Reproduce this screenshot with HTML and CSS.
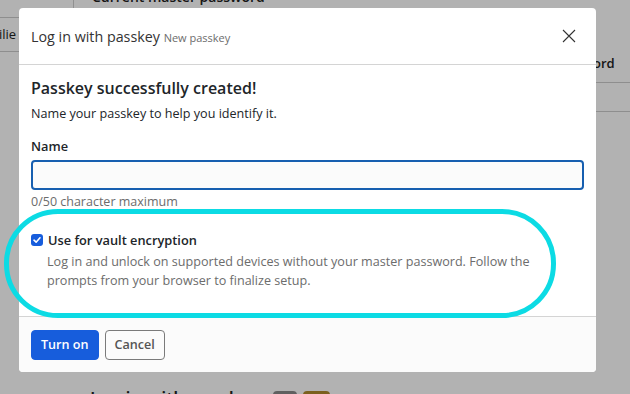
FILE: index.html
```html
<!DOCTYPE html>
<html>
<head>
<meta charset="utf-8">
<link rel="stylesheet" href="styles.css">
</head>
<body>
<div class="page">
  <div class="bg-col-line"></div>
  <div class="bg-top-label">Current master password</div>
  <div class="bg-left-label">ilie</div>
  <div class="bg-left-line a"></div>
  <div class="bg-left-line b"></div>
  <div class="bg-right-label">ord</div>
  <div class="bg-right-line a"></div>
  <div class="bg-right-line b"></div>
  <div class="bg-bottom">
    <span class="bg-bottom-title">Log in with passkey</span>
    <span class="bg-badge grey"></span>
    <span class="bg-badge gold"></span>
  </div>
  <div class="overlay"></div>

  <div class="modal">
    <div class="modal-header">
      <div class="modal-title">Log in with passkey <span class="modal-subtitle">New passkey</span></div>
      <button class="close" aria-label="Close">
        <svg width="14" height="14" viewBox="0 0 14 14"><path d="M1 1L13 13M13 1L1 13" stroke="#333" stroke-width="1.1" fill="none"/></svg>
      </button>
    </div>
    <div class="modal-body">
      <h2 class="success">Passkey successfully created!</h2>
      <p class="lead">Name your passkey to help you identify it.</p>
      <label class="field-label">Name</label>
      <div class="input"></div>
      <div class="hint">0/50 character maximum</div>
      <div class="check-row">
        <span class="checkbox">
          <svg width="12" height="12" viewBox="0 0 12 12"><path d="M3 6.2L5.1 8.2L9 3.8" stroke="#fff" stroke-width="1.6" fill="none" stroke-linecap="round" stroke-linejoin="round"/></svg>
        </span>
        <span class="check-label">Use for vault encryption</span>
      </div>
      <p class="check-desc">Log in and unlock on supported devices without your master password. Follow the prompts from your browser to finalize setup.</p>
    </div>
    <div class="modal-footer">
      <button class="btn primary">Turn on</button>
      <button class="btn secondary">Cancel</button>
    </div>
  </div>

  <div class="annotation"></div>
</div>
</body>
</html>
```

FILE: styles.css
```css
html, body {
  margin: 0;
  padding: 0;
}
body {
  width: 630px;
  height: 394px;
  overflow: hidden;
  font-family: "Open Sans", "Liberation Sans", sans-serif;
  background: #ffffff;
}
.page {
  position: relative;
  width: 630px;
  height: 394px;
  overflow: hidden;
}
.bg-col-line {
  position: absolute;
  left: 73px;
  top: 0;
  width: 1px;
  height: 10px;
  background: #cfcfcf;
}
.bg-top-label {
  position: absolute;
  left: 92px;
  top: -13px;
  font-size: 14px;
  font-weight: 600;
  color: #222;
}
.bg-left-label {
  position: absolute;
  left: -1px;
  top: 25px;
  font-size: 13px;
  color: #222;
}
.bg-left-line {
  position: absolute;
  left: 0;
  width: 20px;
  height: 1px;
  background: #cccccc;
}
.bg-left-line.a { top: 17px; }
.bg-left-line.b { top: 51px; }
.bg-right-label {
  position: absolute;
  left: 593px;
  top: 54px;
  font-size: 13px;
  font-weight: 600;
  color: #222;
}
.bg-right-line {
  position: absolute;
  left: 596px;
  width: 40px;
  height: 1px;
  background: #cccccc;
}
.bg-right-line.a { top: 82px; }
.bg-right-line.b { top: 111px; }
.bg-bottom {
  position: absolute;
  left: 90px;
  top: 388px;
  display: flex;
  align-items: flex-start;
  gap: 6px;
}
.bg-bottom-title {
  font-size: 18px;
  font-weight: 600;
  color: #222;
  line-height: 22px;
  margin-top: -1px;
}
.bg-badge {
  width: 24px;
  height: 16px;
  border-radius: 4px;
  margin-top: 3px;
}
.bg-badge.grey { background: #8a8a8a; margin-left: 8px; }
.bg-badge.gold { background: #b08a2c; width: 27px; }
.overlay {
  position: absolute;
  inset: 0;
  background: rgba(0, 0, 0, 0.3);
}

.modal {
  position: absolute;
  left: 19px;
  top: 8px;
  width: 577px;
  height: 364px;
  background: #ffffff;
  border-radius: 4px;
  display: flex;
  flex-direction: column;
  overflow: hidden;
}
.modal-header {
  height: 56px;
  border-bottom: 1px solid #d4d4d4;
  display: flex;
  align-items: center;
  justify-content: space-between;
  padding: 0 20px 0 12px;
  flex-shrink: 0;
}
.modal-title {
  font-size: 14.3px;
  color: #333;
  margin-top: 1px;
}
.modal-subtitle {
  font-size: 11px;
  color: #6c6c6c;
}
.close {
  border: 0;
  background: none;
  padding: 0;
  width: 14px;
  height: 14px;
  display: flex;
  margin-top: -1px;
}
.modal-body {
  flex: 1;
  padding: 13px 12px 0 12px;
  color: #212529;
}
.success {
  margin: 0;
  font-size: 16px;
  font-weight: 600;
  line-height: 20px;
  color: #212529;
}
.lead {
  margin: 6px 0 0 0;
  font-size: 12.6px;
  line-height: 20px;
}
.field-label {
  display: block;
  margin-top: 12px;
  font-size: 12.8px;
  font-weight: 600;
  line-height: 20px;
}
.input {
  margin-top: 4px;
  height: 26px;
  border: 2px solid #175fb0;
  border-radius: 4px;
  background: #fbfbfb;
}
.hint {
  margin-top: 4px;
  font-size: 12.5px;
  line-height: 16px;
  color: #6c6c6c;
}
.check-row {
  margin-top: 20px;
  display: flex;
  align-items: center;
  gap: 5px;
  height: 20px;
}
.checkbox {
  width: 12px;
  height: 12px;
  border-radius: 3px;
  background: #175ddc;
  display: flex;
  align-items: center;
  justify-content: center;
}
.check-label {
  font-size: 12.8px;
  font-weight: 600;
  line-height: 20px;
}
.check-desc {
  margin: 2px 0 0 16px;
  font-size: 12.6px;
  line-height: 19px;
  color: #6c6c6c;
  max-width: 500px;
}
.modal-footer {
  height: 55px;
  border-top: 1px solid #d4d4d4;
  background: #fbfbfb;
  display: flex;
  align-items: center;
  gap: 6px;
  padding: 0 12px;
  flex-shrink: 0;
}
.btn {
  font-family: "Open Sans", "Liberation Sans", sans-serif;
  font-size: 12.6px;
  font-weight: 600;
  height: 30px;
  border-radius: 4px;
  padding: 0 9px;
  white-space: nowrap;
}
.btn.primary {
  background: #175ddc;
  color: #fff;
  border: 1px solid #175ddc;
}
.btn.secondary {
  background: #fbfbfb;
  color: #555;
  border: 1px solid #7a7a7a;
}
.annotation {
  position: absolute;
  left: 4px;
  top: 209px;
  width: 542px;
  height: 99px;
  border: 5px solid #0cdbe4;
  border-radius: 54px;
}
```
